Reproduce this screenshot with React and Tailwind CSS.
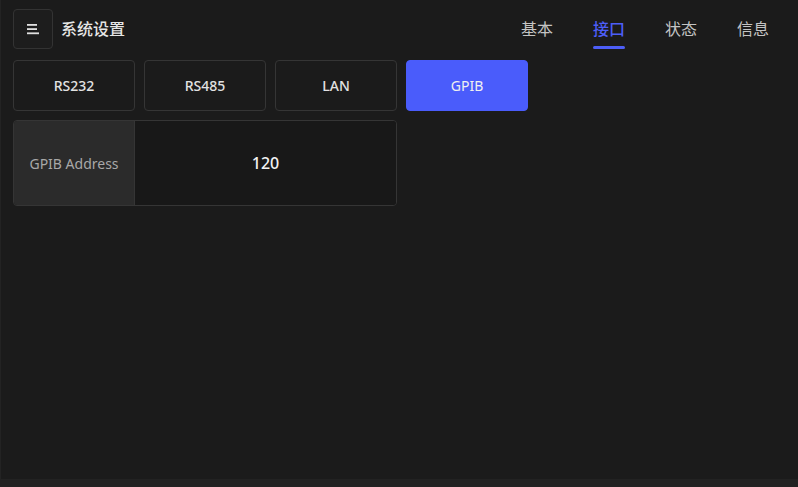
import React, { useState } from 'react';

const TABS = ['基本', '接口', '状态', '信息'];
const PORTS = ['RS232', 'RS485', 'LAN', 'GPIB'];

const App = () => {
  const [tab, setTab] = useState('接口');
  const [port, setPort] = useState('GPIB');

  return (
    <div
      className="w-[798px] h-[487px] flex flex-col bg-[#222222] overflow-hidden"
      style={{ fontFamily: '"Noto Sans", "Noto Sans CJK SC", sans-serif' }}
    >
      <div className="h-[479px] bg-[#1b1b1b] border-l border-[#232323] flex flex-col">
        {/* Header */}
        <div className="h-[60px] flex items-start pl-[12px] pr-[29px] pt-[9px]">
          <button className="w-[40px] h-[40px] rounded-[4px] border border-[#333333] bg-[#1d1d1d] flex items-center justify-center">
            <svg width="14" height="14" viewBox="0 0 14 14">
              <rect x="1" y="2" width="10" height="1.8" fill="#e0e0e0" />
              <rect x="1" y="6.2" width="10" height="1.8" fill="#e0e0e0" />
              <rect x="1" y="10.4" width="12" height="1.8" fill="#e0e0e0" />
            </svg>
          </button>
          <div className="ml-[8px] h-[40px] flex items-center text-[16px] font-medium text-[#e6e6e6]">
            系统设置
          </div>
          <div className="ml-auto flex gap-[40px] h-[40px]">
            {TABS.map(t => (
              <button
                key={t}
                onClick={() => setTab(t)}
                className={`relative h-[40px] flex items-center text-[16px] ${
                  tab === t ? 'text-[#4d5ef7] font-medium' : 'text-[#c4c4c4]'
                }`}
              >
                {t}
                {tab === t && (
                  <span className="absolute left-0 right-0 top-[37px] h-[3px] rounded-full bg-[#4d5ef7]" />
                )}
              </button>
            ))}
          </div>
        </div>

        {/* Interface buttons */}
        <div className="flex gap-[9px] pl-[12px]">
          {PORTS.map(p => (
            <button
              key={p}
              onClick={() => setPort(p)}
              className={`w-[122px] h-[51px] rounded-[4px] border text-[14px] ${
                port === p
                  ? 'bg-[#4a5cfb] border-[#4a5cfb] text-[#f0f0f0]'
                  : 'bg-[#1b1b1b] border-[#353535] text-[#e2e2e2] font-medium'
              }`}
            >
              {p}
            </button>
          ))}
        </div>

        {/* Address card */}
        <div className="ml-[12px] mt-[9px] w-[384px] h-[86px] flex rounded-[4px] border border-[#353535] overflow-hidden">
          <div className="w-[121px] bg-[#2b2b2b] border-r border-[#353535] flex items-center justify-center text-[14px] text-[#a8a8a8]">
            GPIB Address
          </div>
          <div className="flex-1 bg-[#181818] flex items-center justify-center text-[16px] font-medium text-[#f2f2f2]">
            120
          </div>
        </div>
      </div>
    </div>
  );
};

export default App;
